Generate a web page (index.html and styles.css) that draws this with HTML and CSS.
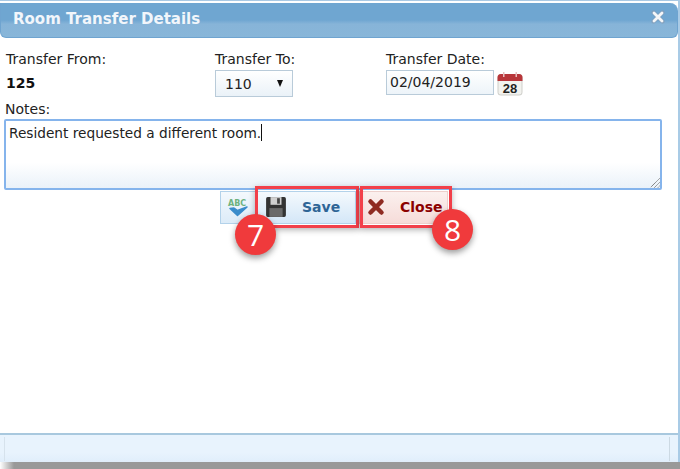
FILE: index.html
```html
<!DOCTYPE html>
<html lang="en">
<head>
<meta charset="utf-8">
<title>Room Transfer Details</title>
<link rel="stylesheet" href="styles.css">
</head>
<body>
<div class="dialog">
  <header class="titlebar">
    <h1 class="title">Room Transfer Details</h1>
    <svg class="close-x" width="14" height="14" viewBox="0 0 14 14"><path d="M2.5 2.5l9 9M11.500 2.500l-9 9" stroke="#8a9bb0" stroke-width="4.200" stroke-linecap="round" opacity=".6"/><path d="M3 3l8 8M11 3l-8 8" stroke="#f4f6f8" stroke-width="2.800" stroke-linecap="round"/></svg>
  </header>
  <main class="content">
    <div class="fields">
      <div class="field field-from">
        <label class="label">Transfer From:</label>
        <div class="value">125</div>
      </div>
      <div class="field field-to">
        <label class="label">Transfer To:</label>
        <div class="select"><span>110</span><span class="caret"></span></div>
      </div>
      <div class="field field-date">
        <label class="label">Transfer Date:</label>
        <div class="date-row">
          <div class="date-input">02/04/2019</div>
          <svg class="cal" width="26" height="24" viewBox="0 0 26 24">
            <rect x="0.500" y="2" width="25" height="21.500" rx="3.500" fill="#cfcfca"/>
            <rect x="1.500" y="8" width="23" height="14.500" rx="2" fill="#f2f2ee"/>
            <path d="M0.500 9V5.500a3.500 3.500 0 0 1 3.500-3.500h18a3.500 3.500 0 0 1 3.500 3.500V9z" fill="#b8363a"/>
            <rect x="6" y="0" width="1.500" height="5" fill="#e6c0c0"/>
            <rect x="18.500" y="0" width="1.500" height="5" fill="#e6c0c0"/>
            <text x="13" y="21" class="cal-day">28</text>
          </svg>
        </div>
      </div>
    </div>
    <label class="label notes-label">Notes:</label>
    <div class="notes">
      <span class="notes-text">Resident requested a different room.</span><span class="cursor"></span>
      <svg class="grip" width="11" height="11" viewBox="0 0 11 11"><path d="M10.500 1.500l-9 9M10.500 5.500l-5 5M10.500 9l-1.500 1.500" stroke="#555" stroke-width="1" stroke-dasharray="1 .6"/></svg>
    </div>
    <div class="actions">
      <div class="spell">
        <span class="abc">ABC</span>
        <svg class="check" width="24" height="14" viewBox="0 0 24 14"><path d="M4 4.500l7.500 7L21 3l-9.500 3.500-3.500-2.500z" fill="#3a8ccb" stroke="#3a8ccb" stroke-width="1.500" stroke-linejoin="round"/></svg>
      </div>
      <button class="btn btn-save">
        <svg width="22" height="22" viewBox="0 0 20 20"><path d="M1 2.500A1.500 1.500 0 0 1 2.500 1h15A1.500 1.500 0 0 1 19 2.500v15a1.500 1.500 0 0 1-1.500 1.500h-15A1.500 1.500 0 0 1 1 17.500z" fill="#333"/><rect x="5" y="1" width="10" height="7" fill="#cfcfcf"/><rect x="11" y="2" width="2.500" height="5" fill="#444"/><rect x="4" y="11" width="12" height="8" fill="#6a6a6a"/></svg>
        <span class="btn-text">Save</span>
      </button>
      <button class="btn btn-close">
        <svg width="18" height="18" viewBox="0 0 18 18"><path d="M3.500 3.500l11 11M14.500 3.500l-11 11" stroke="#8f2b22" stroke-width="4.500" stroke-linecap="round"/></svg>
        <span class="btn-text">Close</span>
      </button>
    </div>
  </main>
  <footer class="footer"><div class="footer-inner"></div></footer>
</div>
<div class="shadow"></div>
<div class="mark mark-save"></div>
<div class="mark mark-close"></div>
<div class="badge badge-7">7</div>
<div class="badge badge-8">8</div>
</body>
</html>
```
FILE: styles.css
```css
* { box-sizing: border-box; }
html, body { margin: 0; padding: 0; }
body {
  width: 680px;
  height: 469px;
  overflow: hidden;
  position: relative;
  background: #fff;
  font-family: "DejaVu Sans", Verdana, sans-serif;
  font-size: 14px;
  color: #222;
}
.dialog {
  height: 462px;
  display: flex;
  flex-direction: column;
  padding-top: 2px;
  border-top: 1px solid #a9c9e4;
  border-right: 2px solid #a9cbe6;
}
.shadow {
  position: absolute;
  left: 0;
  top: 462px;
  width: 680px;
  height: 7px;
  background: linear-gradient(90deg, #fff 0, #999 14px);
}
.titlebar {
  height: 35px;
  flex: none;
  display: flex;
  align-items: center;
  justify-content: space-between;
  padding: 0 12px 3px 12px;
  background: linear-gradient(#6fa6d1 0, #6fa6d1 50%, #87b4d8 62%, #88b6d9 100%);
  border: 1px solid #6fa4d0;
  border-top: 0;
  border-radius: 0 8px 6px 6px;
}
.title {
  margin: 0;
  font-size: 15px;
  font-weight: 700;
  color: #f2f6fb;
}
.close-x { margin-top: -3px; }
.content {
  flex: 1;
  display: flex;
  flex-direction: column;
  padding: 13px 17px 0 4px;
}
.fields { display: flex; height: 48px; }
.field { display: flex; flex-direction: column; }
.field-from { width: 211px; padding-left: 2px; }
.field-to { width: 171px; }
.label { display: block; line-height: 16px; color: #222; }
.value { font-weight: 700; margin-top: 8px; line-height: 16px; color: #111; }
.select {
  width: 78px;
  height: 27px;
  margin-top: 3px;
  display: flex;
  align-items: center;
  justify-content: space-between;
  padding: 0 9px 0 9px;
  border: 1px solid #b9cbd9;
  background: linear-gradient(#fff, #eaf2f8);
}
.caret {
  width: 0;
  height: 0;
  border-left: 3.500px solid transparent;
  border-right: 3.500px solid transparent;
  border-top: 7px solid #111;
  margin-top: -1px;
}
.date-row { display: flex; margin-top: 3px; }
.date-input {
  width: 108px;
  height: 25px;
  line-height: 23px;
  padding-left: 3px;
  border: 1px solid #b9cbd9;
  background: linear-gradient(#fff, #edf4f9);
}
.cal { margin: 2px 0 0 3px; }
.notes-label { margin-top: 2px; height: 16px; padding-left: 1px; }
.notes {
  position: relative;
  margin-top: 2px;
  width: 658px;
  height: 71px;
  padding: 3px 3px;
  border: 2px solid #85b4ec;
  border-radius: 2px;
  background: linear-gradient(#fff 0, #fff 62%, #eaf2f9 100%);
  font-size: 13.700px;
  line-height: 18px;
}
.cursor {
  display: inline-block;
  width: 1px;
  height: 17px;
  background: #111;
  vertical-align: top;
}
.grip { position: absolute; right: 0; bottom: 0; }
.actions {
  display: flex;
  justify-content: flex-start;
  align-items: flex-start;
  margin-top: 1px;
  padding-left: 216px;
}
.spell {
  position: relative;
  width: 36px;
  height: 33px;
  border: 1px solid #b3d2ea;
  background: linear-gradient(#f4f9fd, #dcebf8);
}
.abc {
  position: absolute;
  left: 7px;
  top: 7px;
  font-size: 8px;
  font-weight: 700;
  line-height: 9px;
  color: #6eb27e;
}
.check { position: absolute; left: 5px; top: 12px; }
.btn {
  height: 33px;
  display: flex;
  align-items: center;
  font-family: inherit;
  font-size: 14px;
  font-weight: 700;
  border: 1px solid #b3d2ea;
  padding: 0 0 1px;
}
.btn-save {
  width: 100px;
  padding-left: 8px;
  color: #2f6596;
  background: linear-gradient(#f4f9fd, #d4e7f8);
}
.btn-save .btn-text { margin-left: 15px; }
.btn-close {
  width: 89px;
  padding-left: 7px;
  margin-left: 3px;
  color: #8b0000;
  background: linear-gradient(#fbf0ee, #f6dcd9);
  border-color: #edd0cc;
}
.btn-close .btn-text { margin-left: 15px; }
.footer {
  height: 29px;
  flex: none;
  background: linear-gradient(#e8f3fd, #e8f3fd 65%, #e0eefb);
  border-top: 2px solid #a8c8de;
  padding: 2px 1px 1px 4px;
}
.footer-inner {
  height: 100%;
  border-left: 1px solid #d6e2ec;
  border-right: 1px solid #ccd9e3;
  margin-right: 7px;
}
.mark {
  position: absolute;
  border: 3px solid #f2404a;
  box-shadow: 0 2px 6px rgba(0, 0, 0, .3);
}
.mark-save { left: 255px; top: 186px; width: 104px; height: 42px; }
.mark-close { left: 360px; top: 186px; width: 92px; height: 42px; }
.badge {
  position: absolute;
  width: 41px;
  height: 41px;
  border-radius: 50%;
  background: #f03a3c;
  color: #fff;
  font-family: "Open Sans", sans-serif;
  font-size: 30px;
  line-height: 41px;
  text-align: center;
  box-shadow: 0 3px 6px rgba(0, 0, 0, .4);
}
.badge-7 { left: 235px; top: 214px; }
.badge-8 { left: 432px; top: 209px; }
.cal-day { font-size: 13px; font-weight: 700; fill: #222; text-anchor: middle; font-family: "Liberation Sans", sans-serif; }
```
